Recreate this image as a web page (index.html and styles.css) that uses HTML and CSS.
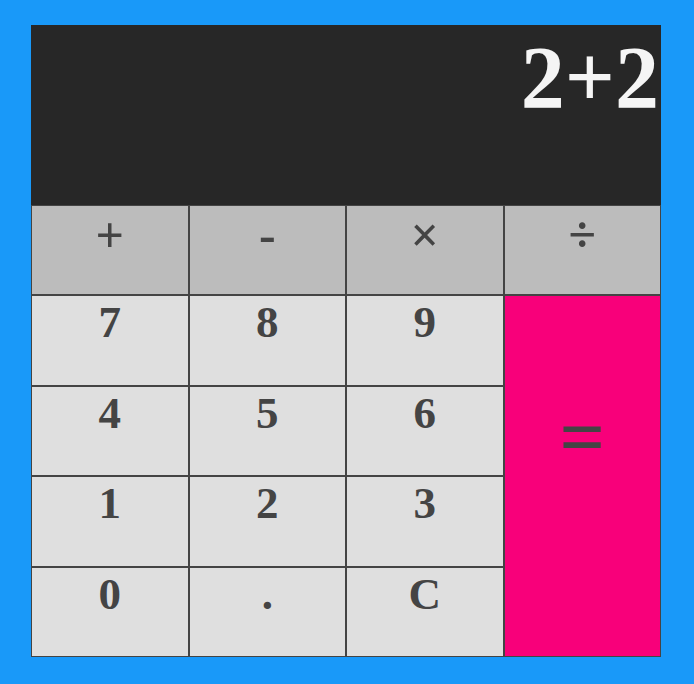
FILE: index.html
```html
<!DOCTYPE html>
<html>
<head>
<meta charset="utf-8">
<link rel="stylesheet" href="styles.css">
</head>
<body>
<div class="calc">
  <div class="display">2+2</div>
  <div class="keys">
    <div class="key op">+</div>
    <div class="key op">-</div>
    <div class="key op">×</div>
    <div class="key op">÷</div>
    <div class="key">7</div>
    <div class="key">8</div>
    <div class="key">9</div>
    <div class="key equals">=</div>
    <div class="key">4</div>
    <div class="key">5</div>
    <div class="key">6</div>
    <div class="key">1</div>
    <div class="key">2</div>
    <div class="key">3</div>
    <div class="key">0</div>
    <div class="key">.</div>
    <div class="key">C</div>
  </div>
</div>
</body>
</html>
```
FILE: styles.css
```css
html, body {
  margin: 0;
  padding: 0;
}
body {
  background: #1999f9;
  height: 684px;
  padding-top: 25px;
  box-sizing: border-box;
  font-family: "Liberation Serif", "Times New Roman", serif;
}
.calc {
  width: 630px;
  margin-left: 31px;
}
.display {
  height: 180px;
  background: #272727;
  color: #f5f5f5;
  font-size: 88px;
  font-weight: bold;
  text-align: right;
  padding-top: 2px;
  padding-right: 2px;
  box-sizing: border-box;
}
.keys {
  display: grid;
  grid-template-columns: repeat(4, 1fr);
  grid-template-rows: repeat(5, 1fr);
  height: 452px;
}
.key {
  box-sizing: border-box;
  border: 1px solid #444;
  background: #dfdfdf;
  color: #444;
  font-size: 45px;
  font-weight: bold;
  text-align: center;
}
.key.op {
  background: #bcbcbc;
  font-size: 50px;
}
.key.equals {
  grid-column: 4;
  grid-row: 2 / span 4;
  background: #f8007a;
  font-size: 80px;
  padding-top: 96px;
}
```
